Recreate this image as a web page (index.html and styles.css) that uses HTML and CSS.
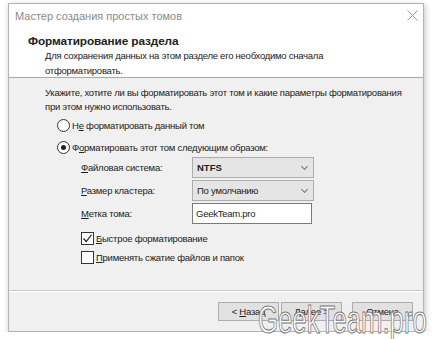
FILE: index.html
```html
<!DOCTYPE html>
<html>

<head>
  <title>Мастер создания простых томов</title>
  <link rel="stylesheet" href="styles.css">
</head>

<body>
  <div class="window">
    <div class="top">
      <div class="titlebar">
        <span class="title">Мастер создания простых томов</span>
        <span class="close">
          <svg width="11" height="11" viewBox="0 0 11 11"><path d="M0.5 0.5 L10.5 10.5 M10.5 0.5 L0.5 10.5" stroke="#999" stroke-width="1" fill="none"/></svg>
        </span>
      </div>
      <div class="header">
        <div class="heading">Форматирование раздела</div>
        <div class="subtext">Для сохранения данных на этом разделе его необходимо сначала<br>отформатировать.</div>
      </div>
    </div>

    <div class="content">
      <p class="intro">Укажите, хотите ли вы форматировать этот том и какие параметры форматирования<br>при этом нужно использовать.</p>

      <div class="options">
        <div class="option">
          <span class="radio"></span>
          <span>Н<u>е</u> форматировать данный том</span>
        </div>
        <div class="option">
          <span class="radio checked"></span>
          <span>Ф<u>о</u>рматировать этот том следующим образом:</span>
        </div>
      </div>

      <div class="fields">
        <div class="field">
          <label><u>Ф</u>айловая система:</label>
          <div class="combo"><span class="bold">NTFS</span><span class="arrow"></span></div>
        </div>
        <div class="field">
          <label><u>Р</u>азмер кластера:</label>
          <div class="combo"><span>По умолчанию</span><span class="arrow"></span></div>
        </div>
        <div class="field">
          <label><u>М</u>етка тома:</label>
          <div class="textbox">GeekTeam.pro</div>
        </div>
      </div>

      <div class="checks">
        <div class="check-row">
          <span class="checkbox">
            <svg width="11" height="11" viewBox="0 0 11 11"><path d="M1.5 5.5 L4.2 8.5 L9.5 1.8" stroke="#222" stroke-width="1.2" fill="none"/></svg>
          </span>
          <span><u>Б</u>ыстрое форматирование</span>
        </div>
        <div class="check-row">
          <span class="checkbox"></span>
          <span><u>П</u>рименять сжатие файлов и папок</span>
        </div>
      </div>
    </div>

    <div class="footer">
      <button>&lt; <u>Н</u>азад</button>
      <button><u>Д</u>алее &gt;</button>
      <button class="cancel">Отмена</button>
    </div>
  </div>

  <div class="watermark">GeekTeam.pro</div>
</body>

</html>
```

FILE: styles.css
```css
body {
  margin: 0;
  background-color: #fff;
  font-family: "Liberation Sans", Arial, sans-serif;
  font-size: 9.5px;
  letter-spacing: -0.25px;
  color: #222;
  overflow: hidden;
}

.window {
  width: 414px;
  height: 327px;
  margin: 3px 0 0 8px;
  border: 1px solid #b4b4b4;
  background-color: #f0f0f0;
  box-shadow: 1px 2px 6px rgba(0, 0, 0, 0.25);
  display: flex;
  flex-direction: column;
}

.top {
  background-color: #fff;
  border-bottom: 1px solid #a8a8a8;
  height: 73px;
}

.titlebar {
  height: 23px;
  display: flex;
  align-items: center;
  justify-content: space-between;
  padding: 0 5px 0 6px;
}

.title {
  color: #8a8a8a;
  font-size: 11px;
  letter-spacing: 0;
}

.close {
  display: flex;
}

.header {
  padding-left: 19px;
}

.heading {
  font-size: 11.8px;
  font-weight: bold;
  letter-spacing: -0.1px;
  line-height: 14px;
  margin-top: 7px;
}

.subtext {
  padding-left: 17px;
  line-height: 15px;
}

.content {
  flex: 1;
  padding: 8px 10px 0 36px;
  border-bottom: 1px solid #c8c8c8;
}

.intro {
  margin: 0;
  line-height: 14px;
}

.options {
  margin-left: 12px;
}

.option {
  display: flex;
  align-items: center;
  height: 22px;
}

.radio {
  width: 11px;
  height: 11px;
  border: 1px solid #333;
  border-radius: 50%;
  background-color: #fff;
  margin-right: 2px;
  position: relative;
}

.radio.checked::after {
  content: '';
  position: absolute;
  left: 3px;
  top: 3px;
  width: 5px;
  height: 5px;
  border-radius: 50%;
  background-color: #222;
}

.fields {
  margin-left: 36px;
  margin-top: -2px;
}

.field {
  display: flex;
  align-items: center;
  height: 23px;
}

.field label {
  width: 111px;
}

.combo {
  width: 110px;
  height: 19px;
  border: 1px solid #adadad;
  background-color: #e5e5e5;
  display: flex;
  align-items: center;
  justify-content: space-between;
  padding: 0 6px 0 4px;
}

.bold {
  font-weight: bold;
  letter-spacing: 0;
}

.arrow {
  width: 4px;
  height: 4px;
  border-right: 1px solid #777;
  border-bottom: 1px solid #777;
  transform: rotate(45deg);
  margin-bottom: 3px;
}

.textbox {
  width: 115px;
  height: 19px;
  border: 1px solid #7a7a7a;
  background-color: #fff;
  display: flex;
  align-items: center;
  padding-left: 3px;
}

.checks {
  margin-left: 36px;
  margin-top: 4px;
}

.check-row {
  display: flex;
  align-items: center;
  height: 19px;
}

.checkbox {
  width: 11px;
  height: 11px;
  border: 1px solid #333;
  background-color: #fff;
  margin-right: 2px;
  display: flex;
}

.footer {
  height: 39px;
  display: flex;
  align-items: center;
  justify-content: flex-end;
  padding-right: 10px;
  border-top: 1px solid #fff;
}

.footer button {
  width: 61px;
  height: 19px;
  margin-left: 2px;
  border: 1px solid #adadad;
  background-color: #e1e1e1;
  font-family: inherit;
  font-size: 9.5px;
  letter-spacing: -0.25px;
  color: #222;
  padding: 0;
}

.footer .cancel {
  margin-left: 10px;
}

.watermark {
  position: absolute;
  left: 258px;
  top: 300px;
  font-family: "Liberation Sans", Arial, sans-serif;
  font-size: 39px;
  line-height: 39px;
  letter-spacing: 0;
  color: #fff;
  -webkit-text-stroke: 1px #777;
  transform: scaleX(0.66);
  transform-origin: left top;
}
```
